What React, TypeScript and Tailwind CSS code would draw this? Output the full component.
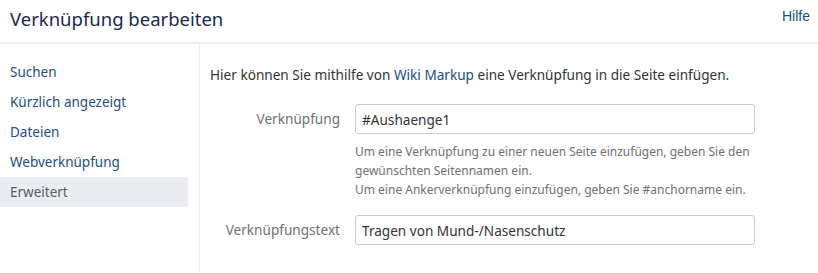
const navItems = ["Suchen", "Kürzlich angezeigt", "Dateien", "Webverknüpfung", "Erweitert"];

const App = () => {
  const active = "Erweitert";
  return (
    <div className="w-[818px] h-[273px] bg-white overflow-hidden font-['Noto_Sans',sans-serif] text-[#333]">
      <div className="flex items-center justify-between h-[44px] pl-[10px] pr-[8px] border-b-2 border-[#ebecf0]">
        <h2 className="text-[18.5px] text-[#172b4d] leading-none pb-[4px]">Verknüpfung bearbeiten</h2>
        <a className="font-['Liberation_Sans',sans-serif] text-[14px] text-[#205081] pb-[9px]">Hilfe</a>
      </div>
      <div className="flex h-[227px]">
        <ul className="w-[200px] shrink-0 border-r border-[#ebecf0] pt-[13px] pr-[11px]">
          {navItems.map((item) => (
            <li
              key={item}
              className={
                item === active
                  ? "h-[30px] flex items-center pl-[10px] text-[13.5px] bg-[#ebecf0] rounded-r-[2px] text-[#505f79]"
                  : "h-[30px] flex items-center pl-[10px] text-[13.5px] text-[#205081]"
              }
            >
              {item}
            </li>
          ))}
        </ul>
        <div className="flex-1 pl-[10px] pt-[21px]">
          <p className="text-[13.6px] text-[#333] leading-[20px]">
            Hier können Sie mithilfe von <a className="text-[#205081]">Wiki Markup</a> eine Verknüpfung in die Seite einfügen.
          </p>
          <div className="flex mt-[19px]">
            <label className="w-[145px] text-right pr-[15px] text-[13.6px] text-[#707070] leading-[30px]">Verknüpfung</label>
            <div>
              <input
                defaultValue="#Aushaenge1"
                className="w-[400px] h-[30px] border border-[#ccc] rounded-[3px] px-[6px] text-[13.6px] text-[#333] font-['Noto_Sans',sans-serif] outline-none"
              />
              <div className="mt-[8px] text-[12px] leading-[19px] text-[#707070]">
                <div>Um eine Verknüpfung zu einer neuen Seite einzufügen, geben Sie den</div>
                <div>gewünschten Seitennamen ein.</div>
                <div>Um eine Ankerverknüpfung einzufügen, geben Sie #anchorname ein.</div>
              </div>
            </div>
          </div>
          <div className="flex mt-[16px]">
            <label className="w-[145px] text-right pr-[15px] text-[13.6px] text-[#707070] leading-[30px]">Verknüpfungstext</label>
            <input
              defaultValue="Tragen von Mund-/Nasenschutz"
              className="w-[400px] h-[30px] border border-[#ccc] rounded-[3px] px-[6px] text-[13.6px] text-[#333] font-['Noto_Sans',sans-serif] outline-none"
            />
          </div>
        </div>
      </div>
    </div>
  );
};

export default App;
